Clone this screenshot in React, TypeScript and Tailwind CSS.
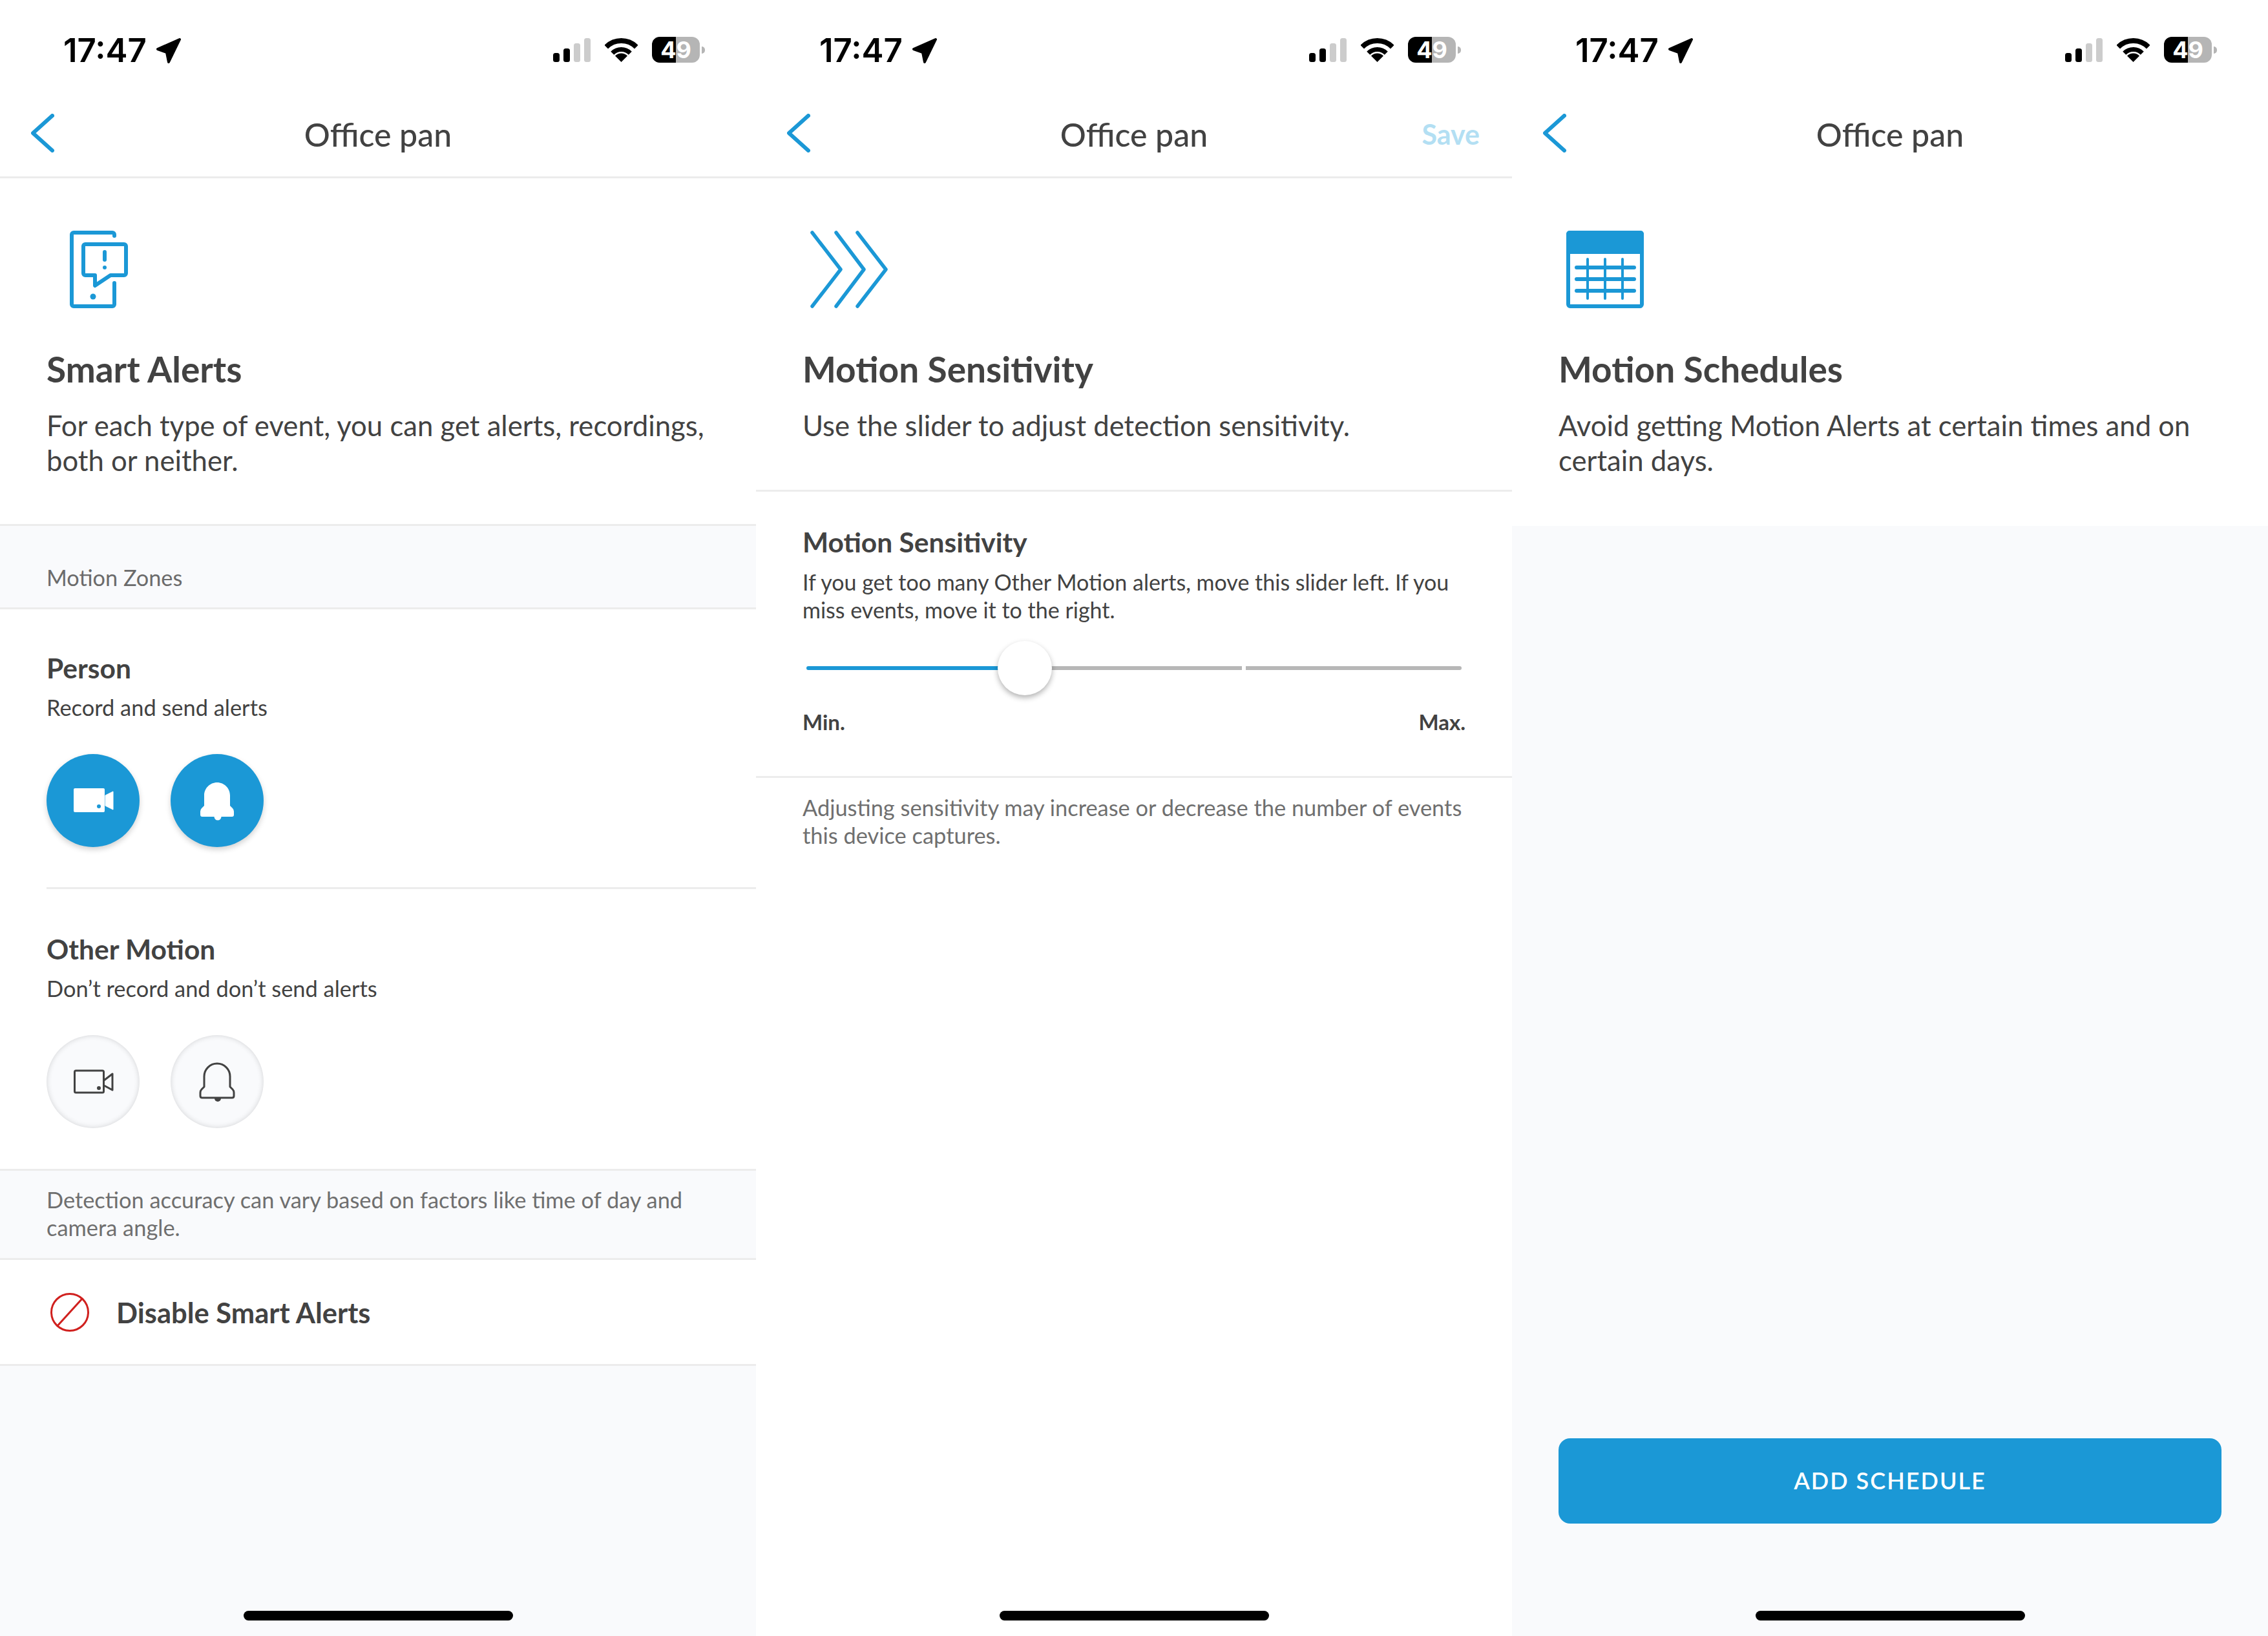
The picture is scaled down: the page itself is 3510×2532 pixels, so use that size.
import React from "react";

const BLUE = "#1b98d6";

function StatusBar() {
  return (
    <div className="flex h-[132px] items-start justify-between pl-[98px] pr-[79px] pt-[57px] text-black">
      <div className="flex items-start gap-[14px]">
        <span className="font-['Inter',sans-serif] text-[51px] font-semibold leading-[42px]">17:47</span>
        <svg width="40" height="40" viewBox="0 0 40 40" className="mt-[1px]">
          <path d="M37 3 L3 18 L17 23 L20 38 Z" fill="#000" stroke="#000" strokeWidth="4" strokeLinejoin="round" />
        </svg>
      </div>
      <div className="flex items-start">
        <svg width="58" height="38" viewBox="0 0 58 38" className="mt-[2px]">
          <rect x="0" y="23" width="10" height="14" rx="3.5" fill="#000" />
          <rect x="16" y="16" width="10" height="21" rx="3.5" fill="#000" />
          <rect x="32" y="8" width="10" height="29" rx="3.5" fill="#ccc" />
          <rect x="48" y="0" width="10" height="37" rx="3.5" fill="#ccc" />
        </svg>
        <svg width="51" height="38" viewBox="0 0 51 38" className="ml-[22px] mt-[1px]">
          <path d="M2.2 14.7 A33 33 0 0 1 48.8 14.7" fill="none" stroke="#000" strokeWidth="8" />
          <path d="M11.7 24.2 A19.5 19.5 0 0 1 39.3 24.2" fill="none" stroke="#000" strokeWidth="7" />
          <path d="M25.5 38 L16 28.5 A13.4 13.4 0 0 1 35 28.5 Z" fill="#000" />
        </svg>
        <div className="ml-[22px] flex h-[40px] w-[74px] items-center justify-center rounded-[12px] bg-[linear-gradient(90deg,#000_50%,#b5b5b5_50%)] font-['Inter',sans-serif] text-[36px] font-bold leading-none text-white">
          49
        </div>
        <div className="ml-[3px] mt-[15px] h-[11px] w-[5px] rounded-r-full bg-[#b5b5b5]" />
      </div>
    </div>
  );
}

function Nav({ save, border = true }: { save?: boolean; border?: boolean }) {
  return (
    <div className={`grid h-[144px] grid-cols-[1fr_auto_1fr] items-start border-b-[3px] px-[48px] ${border ? "border-[#ececec]" : "border-white"}`}>
      <svg width="36" height="60" viewBox="0 0 36 60" className="mt-[44px]">
        <polyline points="33,3 3,30 33,57" fill="none" stroke={BLUE} strokeWidth="6" strokeLinecap="round" strokeLinejoin="round" />
      </svg>
      <div className="mt-[48px] text-[50px] font-medium leading-[56px] text-[#424242]">Office pan</div>
      {save ? (
        <div className="mt-[50px] pr-[2px] text-right text-[43px] font-bold leading-[52px] text-[#b3dff3]">Save</div>
      ) : (
        <div />
      )}
    </div>
  );
}

function Intro({ icon, title, children, className = "" }: { icon: React.ReactNode; title: string; children: React.ReactNode; className?: string }) {
  return (
    <div className={`px-[72px] pt-[81px] ${className}`}>
      <div className="h-[120px]">{icon}</div>
      <div className="mt-[62px] text-[55px] font-bold leading-[64px] text-[#424242]">{title}</div>
      <div className="mt-[28px] text-[43.7px] leading-[54px] text-[#424242]">{children}</div>
    </div>
  );
}

function PhoneIcon() {
  return (
    <svg width="90" height="120" viewBox="0 0 90 120" className="ml-[36px]" fill="none" stroke={BLUE} strokeWidth="6" strokeLinecap="round" strokeLinejoin="round">
      <path d="M69 8 V6 a3 3 0 0 0 -3 -3 H6 a3 3 0 0 0 -3 3 V114 a3 3 0 0 0 3 3 H66 a3 3 0 0 0 3 -3 V81" />
      <path d="M24 21 H84 a3 3 0 0 1 3 3 V66 a3 3 0 0 1 -3 3 H63 L39 85 V69 H24 a3 3 0 0 1 -3 -3 V24 a3 3 0 0 1 3 -3 Z" />
      <path d="M54 33 V45" />
      <circle cx="54" cy="57" r="3" fill={BLUE} stroke="none" />
      <circle cx="36" cy="102" r="4.5" fill={BLUE} stroke="none" />
    </svg>
  );
}

function ChevronsIcon() {
  return (
    <svg width="120" height="120" viewBox="0 0 120 120" className="ml-[12px]" fill="none" stroke={BLUE} strokeWidth="5.5" strokeLinecap="round" strokeLinejoin="round">
      <polyline points="3,3 47,60 3,117" />
      <polyline points="40,3 83,60 40,117" />
      <polyline points="73,3 117,60 73,117" />
    </svg>
  );
}

function CalendarIcon() {
  return (
    <svg width="120" height="120" viewBox="0 0 120 120" className="ml-[12px]" fill="none">
      <rect x="3" y="3" width="114" height="114" rx="3" stroke={BLUE} strokeWidth="6" />
      <rect x="0" y="0" width="120" height="36" rx="5" fill={BLUE} />
      <g stroke={BLUE} strokeLinecap="round">
        <path d="M16 57 H105 M16 75 H105 M16 93 H105" strokeWidth="6" />
        <path d="M33 44 V105 M60 44 V105 M87 44 V105" strokeWidth="4" />
      </g>
    </svg>
  );
}

function Video({ on }: { on: boolean }) {
  return on ? (
    <svg width="144" height="144" viewBox="0 0 144 144">
      <rect x="42" y="53" width="48" height="37" rx="2" fill="#fff" />
      <path d="M91 64 L103 58 V86 L91 80 Z" fill="#fff" stroke="#fff" strokeLinejoin="round" />
      <circle cx="81" cy="81" r="3" fill={BLUE} />
    </svg>
  ) : (
    <svg width="144" height="144" viewBox="0 0 144 144" fill="none" stroke="#424242" strokeWidth="3" strokeLinejoin="round">
      <rect x="43.5" y="55" width="45" height="34" rx="2" />
      <path d="M89 70 L102 60 V85 L89 78" />
      <circle cx="81" cy="82" r="3" fill="#424242" stroke="none" />
    </svg>
  );
}

function Bell({ on }: { on: boolean }) {
  const d = "M72 44 c-11 0 -20 9 -20 20 V80 l-4 4 q-2 2 -2 5 v5 q0 3 3 3 H95 q3 0 3 -3 v-5 q0 -3 -2 -5 l-4 -4 V64 c0 -11 -9 -20 -20 -20 z";
  return on ? (
    <svg width="144" height="144" viewBox="0 0 144 144">
      <path d={d} fill="#fff" />
      <circle cx="73" cy="97" r="5.5" fill="#fff" />
    </svg>
  ) : (
    <svg width="144" height="144" viewBox="0 0 144 144">
      <path d={d} fill="none" stroke="#424242" strokeWidth="3" strokeLinejoin="round" />
      <path d="M68 98 a5 5 0 0 0 10 0 z" fill="#424242" />
    </svg>
  );
}

function Circle({ on, children }: { on: boolean; children: React.ReactNode }) {
  return (
    <div
      className={`h-[144px] w-[144px] rounded-full ${
        on ? "bg-[#1b98d6] shadow-[0_4px_8px_rgba(0,0,0,0.18)]" : "bg-[#f9fafc] shadow-[inset_0_0_8px_rgba(0,0,0,0.16)]"
      }`}
    >
      {children}
    </div>
  );
}

function EventRow({ title, sub, on, className }: { title: string; sub: string; on: boolean; className: string }) {
  return (
    <div className={className}>
      <div className="text-[42.5px] font-bold leading-[50px] text-[#424242]">{title}</div>
      <div className="mt-[14px] text-[34.4px] leading-[44px] text-[#424242]">{sub}</div>
      <div className="mt-[50px] flex gap-[48px]">
        <Circle on={on}>
          <Video on={on} />
        </Circle>
        <Circle on={on}>
          <Bell on={on} />
        </Circle>
      </div>
    </div>
  );
}

function HomeBar() {
  return <div className="mx-auto mb-[24px] mt-auto h-[15px] w-[417px] rounded-full bg-black" />;
}

function PanelOne() {
  return (
    <div className="flex h-full w-[1170px] flex-col bg-white">
      <StatusBar />
      <Nav />
      <Intro icon={<PhoneIcon />} title="Smart Alerts" className="h-[538px] border-b-[3px] border-[#ececec]">
        For each type of event, you can get alerts, recordings, both or neither.
      </Intro>
      <div className="h-[129px] border-b-[3px] border-[#ececec] bg-[#f9fafc] px-[72px] pt-[60px] text-[34.3px] leading-[40px] text-[#6b6b6b]">Motion Zones</div>
      <div className="ml-[72px] h-[433px] border-b-[3px] border-[#ececec]">
        <EventRow className="pt-[66px]" title="Person" sub="Record and send alerts" on />
      </div>
      <div className="h-[436px] border-b-[3px] border-[#ececec] px-[72px]">
        <EventRow className="pt-[68px]" title="Other Motion" sub="Don’t record and don’t send alerts" on={false} />
      </div>
      <div className="h-[138px] border-b-[3px] border-[#ececec] bg-[#f9fafc] px-[72px] pt-[23px] text-[34.4px] leading-[43px] text-[#6f6f6f]">
        Detection accuracy can vary based on factors like time of day and camera angle.
      </div>
      <div className="flex h-[164px] items-center gap-[42px] border-b-[3px] border-[#ececec] pl-[78px]">
        <svg width="60" height="60" viewBox="0 0 60 60" fill="none" stroke="#d0201e" strokeWidth="3">
          <circle cx="30" cy="30" r="28.5" />
          <path d="M50 8 L10 52" />
        </svg>
        <span className="text-[43.5px] font-bold leading-[50px] text-[#424242]">Disable Smart Alerts</span>
      </div>
      <div className="flex flex-1 flex-col bg-[#f9fafc]">
        <HomeBar />
      </div>
    </div>
  );
}

function PanelTwo() {
  return (
    <div className="flex h-full w-[1170px] flex-col bg-white">
      <StatusBar />
      <Nav save />
      <Intro icon={<ChevronsIcon />} title="Motion Sensitivity" className="h-[485px] border-b-[3px] border-[#ececec]">
        Use the slider to adjust detection sensitivity.
      </Intro>
      <div className="h-[443px] border-b-[3px] border-[#ececec] px-[72px] pt-[53px]">
        <div className="text-[42.5px] font-bold leading-[50px] text-[#424242]">Motion Sensitivity</div>
        <div className="mt-[15px] text-[34px] leading-[43px] text-[#424242]">
          If you get too many Other Motion alerts, move this slider left. If you miss events, move it to the right.
        </div>
        <div className="relative mx-[6px] mt-[27px] flex h-[84px] items-center gap-[6px]">
          <div className="h-[6px] w-[340px] rounded-l-full bg-[#1b98d6]" />
          <div className="-ml-[6px] h-[6px] w-[334px] bg-[#b7b7b7]" />
          <div className="h-[6px] w-[334px] rounded-r-full bg-[#b7b7b7]" />
          <div className="absolute left-[296px] top-0 h-[84px] w-[84px] rounded-full bg-white shadow-[0_4px_8px_rgba(0,0,0,0.3)]" />
        </div>
        <div className="mt-[21px] flex justify-between text-[33px] font-bold leading-[40px] text-[#424242]">
          <span>Min.</span>
          <span>Max.</span>
        </div>
      </div>
      <div className="px-[72px] pt-[24px] text-[34.4px] leading-[43px] text-[#6f6f6f]">
        Adjusting sensitivity may increase or decrease the number of events this device captures.
      </div>
      <HomeBar />
    </div>
  );
}

function PanelThree() {
  return (
    <div className="flex h-full w-[1170px] flex-col bg-white">
      <StatusBar />
      <Nav border={false} />
      <Intro icon={<CalendarIcon />} title="Motion Schedules" className="h-[538px]">
        Avoid getting Motion Alerts at certain times and on certain days.
      </Intro>
      <div className="flex flex-1 flex-col bg-[#f9fafc]">
        <div className="mx-[72px] mt-auto flex h-[132px] items-center justify-center rounded-[18px] bg-[#1b98d6] pb-[3px] text-[36px] font-semibold tracking-[2px] text-white">
          ADD SCHEDULE
        </div>
        <div className="mx-auto mb-[24px] mt-[135px] h-[15px] w-[417px] rounded-full bg-black" />
      </div>
    </div>
  );
}

export default function App() {
  return (
    <div className="flex h-[2532px] w-[3510px] font-['Lato',sans-serif]">
      <PanelOne />
      <PanelTwo />
      <PanelThree />
    </div>
  );
}
